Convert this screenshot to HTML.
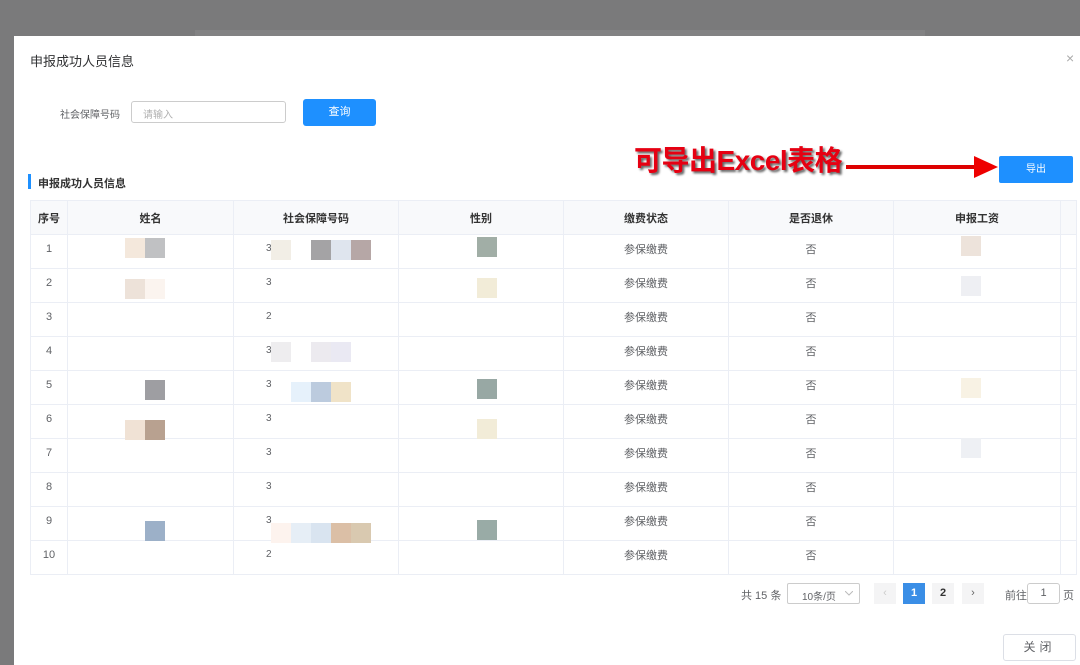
<!DOCTYPE html>
<html><head><meta charset="utf-8"><style>
*{margin:0;padding:0;box-sizing:border-box}
body{width:1080px;height:665px;overflow:hidden;background:#7a7a7b;font-family:"Liberation Sans","Noto Sans CJK SC",sans-serif;position:relative}
.modal{position:absolute;left:14px;top:36px;width:1066px;height:629px;background:#fff}
.a{position:absolute}
table{position:absolute;left:30px;top:200px;border-collapse:collapse;font-size:11px;color:#606266}
td,th{border:1px solid #ebeef5;text-align:center;height:34px;padding:0 0 5px 0}
th{background:#f8f9fb;color:#333;font-weight:bold;padding:0}
.b{position:absolute;width:20px;height:20px}
.d{position:absolute;left:266px;font-size:10px;color:#606266}
</style></head><body>
<div class="a" style="left:195px;top:30px;width:730px;height:6px;background:#828283"></div>
<div class="modal"></div>
<div class="a" style="left:30px;top:51px;font-size:13px;color:#303133">申报成功人员信息</div>
<div class="a" style="left:1066px;top:50px;color:#aaa;font-size:14px">×</div>
<div class="a" style="left:60px;top:106px;font-size:10px;color:#606266">社会保障号码</div>
<div class="a" style="left:131px;top:101px;width:155px;height:22px;border:1px solid #ccc;border-radius:3px;font-size:10px;color:#b0b0b0;padding:4px 11px">请输入</div>
<div class="a" style="left:303px;top:99px;width:73px;height:27px;background:#1e90ff;border-radius:3px;color:#fff;font-size:11px;text-align:center;line-height:27px">查询</div>
<div class="a" style="left:28px;top:174px;width:3px;height:15px;background:#1e90ff"></div>
<div class="a" style="left:38px;top:175px;font-size:11px;font-weight:bold;color:#333">申报成功人员信息</div>
<div class="a" style="left:634px;top:143px;font-size:28px;font-weight:bold;color:#e60012;text-shadow:2px 2px 2px #666;line-height:36px;letter-spacing:-0.5px">可导出Excel表格</div>
<svg class="a" style="left:846px;top:155px" width="152" height="24"><line x1="0" y1="12" x2="130" y2="12" stroke="#d00" stroke-width="4"/><polygon points="128,1 152,12 128,23" fill="#e00"/></svg>
<div class="a" style="left:999px;top:156px;width:74px;height:27px;background:#1e90ff;border-radius:2px;color:#fff;font-size:10px;text-align:center;line-height:27px">导出</div>
<table>
<tr><th style="width:37px">序号</th><th style="width:166px">姓名</th><th style="width:165px">社会保障号码</th><th style="width:165px">性别</th><th style="width:165px">缴费状态</th><th style="width:165px">是否退休</th><th style="width:167px">申报工资</th><th style="width:16px"></th></tr>
<tr><td>1</td><td></td><td></td><td></td><td>参保缴费</td><td>否</td><td></td><td></td></tr>
<tr><td>2</td><td></td><td></td><td></td><td>参保缴费</td><td>否</td><td></td><td></td></tr>
<tr><td>3</td><td></td><td></td><td></td><td>参保缴费</td><td>否</td><td></td><td></td></tr>
<tr><td>4</td><td></td><td></td><td></td><td>参保缴费</td><td>否</td><td></td><td></td></tr>
<tr><td>5</td><td></td><td></td><td></td><td>参保缴费</td><td>否</td><td></td><td></td></tr>
<tr><td>6</td><td></td><td></td><td></td><td>参保缴费</td><td>否</td><td></td><td></td></tr>
<tr><td>7</td><td></td><td></td><td></td><td>参保缴费</td><td>否</td><td></td><td></td></tr>
<tr><td>8</td><td></td><td></td><td></td><td>参保缴费</td><td>否</td><td></td><td></td></tr>
<tr><td>9</td><td></td><td></td><td></td><td>参保缴费</td><td>否</td><td></td><td></td></tr>
<tr><td>10</td><td></td><td></td><td></td><td>参保缴费</td><td>否</td><td></td><td></td></tr>
</table>
<div class="d" style="top:243px">3</div><div class="d" style="top:277px">3</div><div class="d" style="top:311px">2</div><div class="d" style="top:345px">3</div><div class="d" style="top:379px">3</div><div class="d" style="top:413px">3</div><div class="d" style="top:447px">3</div><div class="d" style="top:481px">3</div><div class="d" style="top:515px">3</div><div class="d" style="top:549px">2</div>
<div class="b" style="left:125px;top:238px;background:#f4e8dc"></div><div class="b" style="left:145px;top:238px;background:#c0c1c3"></div>
<div class="b" style="left:271px;top:240px;background:#f2eee6"></div><div class="b" style="left:311px;top:240px;background:#a4a3a5"></div><div class="b" style="left:331px;top:240px;background:#dfe5ee"></div><div class="b" style="left:351px;top:240px;background:#b6a7a6"></div>
<div class="b" style="left:477px;top:237px;background:#a1aea6"></div><div class="b" style="left:961px;top:236px;background:#ede3db"></div>
<div class="b" style="left:125px;top:279px;background:#ede2d9"></div><div class="b" style="left:145px;top:279px;background:#fbf4ef"></div>
<div class="b" style="left:477px;top:278px;background:#f2ecd8"></div><div class="b" style="left:961px;top:276px;background:#eeeff3"></div>
<div class="b" style="left:271px;top:342px;background:#eeedef"></div><div class="b" style="left:311px;top:342px;background:#eceaef"></div><div class="b" style="left:331px;top:342px;background:#eae9f3"></div>
<div class="b" style="left:145px;top:380px;background:#9e9ea2"></div>
<div class="b" style="left:291px;top:382px;background:#e6f1fb"></div><div class="b" style="left:311px;top:382px;background:#bccbde"></div><div class="b" style="left:331px;top:382px;background:#f0e3c8"></div>
<div class="b" style="left:477px;top:379px;background:#98a8a4"></div><div class="b" style="left:961px;top:378px;background:#f8f2e4"></div>
<div class="b" style="left:125px;top:420px;background:#f0e2d5"></div><div class="b" style="left:145px;top:420px;background:#b8a190"></div>
<div class="b" style="left:477px;top:419px;background:#f2ecd8"></div><div class="b" style="left:961px;top:438px;background:#eef0f4"></div>
<div class="b" style="left:145px;top:521px;background:#9cb0c8"></div>
<div class="b" style="left:271px;top:523px;background:#fdf3ee"></div><div class="b" style="left:291px;top:523px;background:#e6eef6"></div><div class="b" style="left:311px;top:523px;background:#d9e4f0"></div><div class="b" style="left:331px;top:523px;background:#dbbfa6"></div><div class="b" style="left:351px;top:523px;background:#d9c9b0"></div>
<div class="b" style="left:477px;top:520px;background:#99aba6"></div>
<div class="a" style="left:741px;top:587px;font-size:11px;color:#606266">共 15 条</div>
<div class="a" style="left:787px;top:583px;width:73px;height:21px;border:1px solid #ccc;border-radius:2px;font-size:10px;color:#606266;padding:4px 0 0 14px;white-space:nowrap">10条/页</div>
<svg class="a" style="left:845px;top:591px" width="8" height="5"><polyline points="0,0 4,4 8,0" fill="none" stroke="#bbb"/></svg>
<div class="a" style="left:874px;top:583px;width:22px;height:21px;background:#f4f4f5;color:#ccc;font-size:11px;text-align:center;line-height:21px">‹</div>
<div class="a" style="left:903px;top:583px;width:22px;height:21px;background:#3a8ee6;color:#fff;font-size:11px;font-weight:bold;text-align:center;line-height:21px">1</div>
<div class="a" style="left:932px;top:583px;width:22px;height:21px;background:#f4f4f5;color:#333;font-size:11px;font-weight:bold;text-align:center;line-height:21px">2</div>
<div class="a" style="left:962px;top:583px;width:22px;height:21px;background:#f4f4f5;color:#666;font-size:11px;text-align:center;line-height:21px">›</div>
<div class="a" style="left:1005px;top:587px;font-size:11px;color:#606266">前往</div>
<div class="a" style="left:1027px;top:583px;width:33px;height:21px;border:1px solid #ccc;border-radius:3px;font-size:11px;color:#606266;text-align:center;line-height:19px">1</div>
<div class="a" style="left:1063px;top:587px;font-size:11px;color:#606266">页</div>
<div class="a" style="left:1003px;top:634px;width:73px;height:27px;border:1px solid #dcdfe6;border-radius:3px;font-size:12px;color:#606266;text-align:center;line-height:25px;letter-spacing:4px">关闭</div>
</body></html>
